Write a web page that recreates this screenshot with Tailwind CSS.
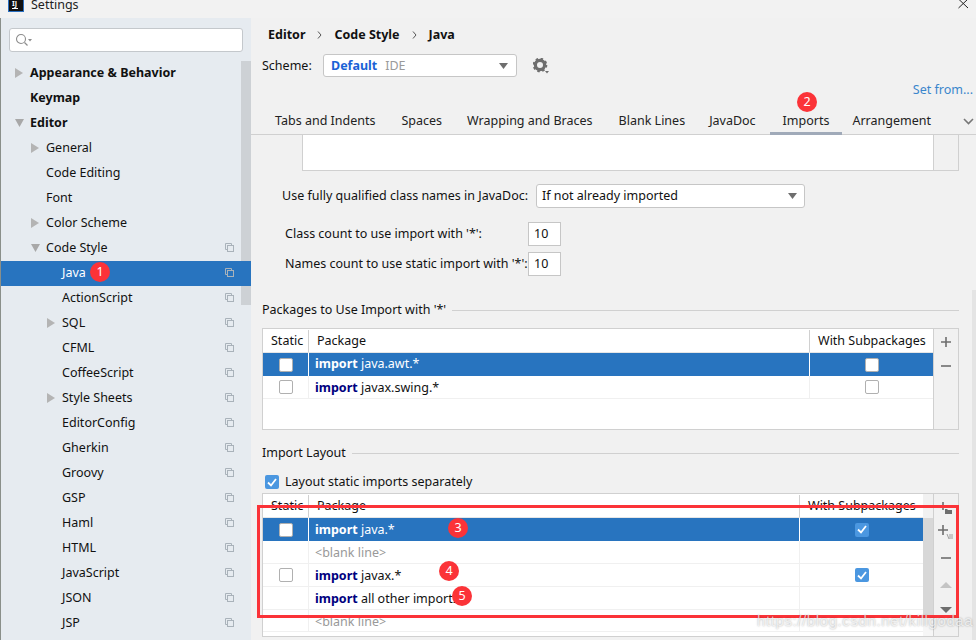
<!DOCTYPE html>
<html><head><meta charset="utf-8">
<script src="https://cdn.jsdelivr.net/npm/@tailwindcss/browser@4"></script>
<title>Settings</title></head>
<body class="m-0">
<div class="relative w-[976px] h-[640px] overflow-hidden bg-[#f1f1f1] text-[12.5px] text-[#111] font-['Noto_Sans','Open_Sans',sans-serif] leading-[18px] flex flex-col">
  <!-- title bar -->
  <div class="h-[18px] shrink-0 flex items-start bg-[#f2f2f2] pl-[8px]">
    <div class="w-[16px] h-[12px] bg-[#111] border-x border-b border-[#2a6fc0] relative overflow-hidden"><div class="absolute left-[3px] bottom-[2px] w-[6px] h-[1px] bg-white"></div><div class="absolute left-[3px] top-0 text-[7px] leading-[7px] text-white font-bold">IJ</div></div>
    <span class="ml-[7px] -mt-[4px] text-[#222]">Settings</span>
    <svg class="ml-auto mr-[7px] -mt-[1px]" width="11" height="10" viewBox="0 0 11 10"><path d="M0.5 0 L10 9 M10 0 L0.5 9" stroke="#222" stroke-width="1" fill="none"/></svg>
  </div>
  <div class="flex flex-1 min-h-0">
    <!-- sidebar -->
    <aside class="relative w-[251px] shrink-0 bg-[#e6ebf0] border-l border-[#8a8f8a] flex flex-col overflow-hidden">
      <div class="mt-[10px] ml-[8px] w-[234px] h-[24px] shrink-0 bg-white border border-[#c4c8cc] rounded-[3px] flex items-center pl-[5px]">
        <svg width="18" height="14" viewBox="0 0 18 14"><circle cx="6" cy="6" r="4.5" fill="none" stroke="#8d8d8d" stroke-width="1.1"/><path d="M9.5 9.5 L12.5 12.5" stroke="#8d8d8d" stroke-width="1.2"/><path d="M13 6 L17 6 L15 8.5 Z" fill="#8d8d8d"/></svg>
      </div>
      <div class="absolute left-[240px] top-[43px] w-[10px] h-[244px] bg-[#cdd1d5]"></div>
      <ul class="mt-[9px] flex flex-col relative">
        <li class="h-[25px] pb-[2px] flex items-center pl-[14px] font-bold"><svg class="w-[9px] h-[10px] mr-[6px]" viewBox="0 0 9 10"><path d="M0 0 L8 5 L0 10 Z" fill="#b4b4b4"/></svg>Appearance &amp; Behavior</li>
        <li class="h-[25px] pb-[2px] flex items-center pl-[29px] font-bold">Keymap</li>
        <li class="h-[25px] pb-[2px] flex items-center pl-[14px] font-bold"><svg class="w-[9px] h-[10px] mr-[6px]" viewBox="0 0 9 10"><path d="M0 1 L9 1 L4.5 9 Z" fill="#a8a8a8"/></svg>Editor</li>
        <li class="h-[25px] pb-[2px] flex items-center pl-[30px]"><svg class="w-[9px] h-[10px] mr-[6px]" viewBox="0 0 9 10"><path d="M0 0 L8 5 L0 10 Z" fill="#b4b4b4"/></svg>General</li>
        <li class="h-[25px] pb-[2px] flex items-center pl-[45px]">Code Editing</li>
        <li class="h-[25px] pb-[2px] flex items-center pl-[45px]">Font</li>
        <li class="h-[25px] pb-[2px] flex items-center pl-[30px]"><svg class="w-[9px] h-[10px] mr-[6px]" viewBox="0 0 9 10"><path d="M0 0 L8 5 L0 10 Z" fill="#b4b4b4"/></svg>Color Scheme</li>
        <li class="h-[25px] pb-[2px] flex items-center pl-[30px]"><svg class="w-[9px] h-[10px] mr-[6px]" viewBox="0 0 9 10"><path d="M0 1 L9 1 L4.5 9 Z" fill="#a8a8a8"/></svg>Code Style<svg class="ml-auto mr-[17px]" width="9" height="9" viewBox="0 0 9 9"><use href="#cp"/></svg></li>
        <li class="h-[25px] pb-[2px] flex items-center pl-[61px] bg-[#2874bf] text-white">Java<svg class="ml-auto mr-[17px]" width="9" height="9" viewBox="0 0 9 9"><use href="#cp"/></svg></li>
        <li class="h-[25px] pb-[2px] flex items-center pl-[61px]">ActionScript<svg class="ml-auto mr-[17px]" width="9" height="9" viewBox="0 0 9 9"><use href="#cp"/></svg></li>
        <li class="h-[25px] pb-[2px] flex items-center pl-[46px]"><svg class="w-[9px] h-[10px] mr-[6px]" viewBox="0 0 9 10"><path d="M0 0 L8 5 L0 10 Z" fill="#b4b4b4"/></svg>SQL<svg class="ml-auto mr-[17px]" width="9" height="9" viewBox="0 0 9 9"><use href="#cp"/></svg></li>
        <li class="h-[25px] pb-[2px] flex items-center pl-[61px]">CFML<svg class="ml-auto mr-[17px]" width="9" height="9" viewBox="0 0 9 9"><use href="#cp"/></svg></li>
        <li class="h-[25px] pb-[2px] flex items-center pl-[61px]">CoffeeScript<svg class="ml-auto mr-[17px]" width="9" height="9" viewBox="0 0 9 9"><use href="#cp"/></svg></li>
        <li class="h-[25px] pb-[2px] flex items-center pl-[46px]"><svg class="w-[9px] h-[10px] mr-[6px]" viewBox="0 0 9 10"><path d="M0 0 L8 5 L0 10 Z" fill="#b4b4b4"/></svg>Style Sheets<svg class="ml-auto mr-[17px]" width="9" height="9" viewBox="0 0 9 9"><use href="#cp"/></svg></li>
        <li class="h-[25px] pb-[2px] flex items-center pl-[61px]">EditorConfig<svg class="ml-auto mr-[17px]" width="9" height="9" viewBox="0 0 9 9"><use href="#cp"/></svg></li>
        <li class="h-[25px] pb-[2px] flex items-center pl-[61px]">Gherkin<svg class="ml-auto mr-[17px]" width="9" height="9" viewBox="0 0 9 9"><use href="#cp"/></svg></li>
        <li class="h-[25px] pb-[2px] flex items-center pl-[61px]">Groovy<svg class="ml-auto mr-[17px]" width="9" height="9" viewBox="0 0 9 9"><use href="#cp"/></svg></li>
        <li class="h-[25px] pb-[2px] flex items-center pl-[61px]">GSP<svg class="ml-auto mr-[17px]" width="9" height="9" viewBox="0 0 9 9"><use href="#cp"/></svg></li>
        <li class="h-[25px] pb-[2px] flex items-center pl-[61px]">Haml<svg class="ml-auto mr-[17px]" width="9" height="9" viewBox="0 0 9 9"><use href="#cp"/></svg></li>
        <li class="h-[25px] pb-[2px] flex items-center pl-[61px]">HTML<svg class="ml-auto mr-[17px]" width="9" height="9" viewBox="0 0 9 9"><use href="#cp"/></svg></li>
        <li class="h-[25px] pb-[2px] flex items-center pl-[61px]">JavaScript<svg class="ml-auto mr-[17px]" width="9" height="9" viewBox="0 0 9 9"><use href="#cp"/></svg></li>
        <li class="h-[25px] pb-[2px] flex items-center pl-[61px]">JSON<svg class="ml-auto mr-[17px]" width="9" height="9" viewBox="0 0 9 9"><use href="#cp"/></svg></li>
        <li class="h-[25px] pb-[2px] flex items-center pl-[61px]">JSP<svg class="ml-auto mr-[17px]" width="9" height="9" viewBox="0 0 9 9"><use href="#cp"/></svg></li>
      </ul>
      <div class="absolute left-[240px] top-[243px] w-[10px] h-[25px] bg-[#2874bf]/80"></div>
      <svg class="hidden"><defs><g id="cp"><path d="M0.5 0.5 H6.5 V2 M0.5 0.5 V6.5 H2" fill="none" stroke="#a9b2ba"/><rect x="2.5" y="2.5" width="6" height="6" fill="none" stroke="#a9b2ba"/></g></defs></svg>
    </aside>
    <!-- main -->
    <main class="relative flex-1 min-w-0 flex flex-col">
      <div class="h-[93px] shrink-0 relative">
        <div class="pt-[4px] pl-[17px] flex items-center font-bold h-[25px] box-content">
          <span>Editor</span><svg class="mx-[12px]" width="5" height="8" viewBox="0 0 5 8"><path d="M1 0.5 L4 4 L1 7.5" fill="none" stroke="#555"/></svg><span>Code Style</span><svg class="mx-[12px]" width="5" height="8" viewBox="0 0 5 8"><path d="M1 0.5 L4 4 L1 7.5" fill="none" stroke="#555"/></svg><span>Java</span>
        </div>
        <div class="flex items-center pl-[11px] mt-[7px]">
          <span class="w-[61px]">Scheme:</span>
          <div class="w-[194px] h-[23px] bg-white border border-[#c6c6c6] rounded-[3px] flex items-center pl-[7px] pr-[8px]">
            <span class="font-bold text-[#1a62d6]">Default</span><span class="ml-[8px] text-[#9a9a9a]">IDE</span>
            <svg class="ml-auto" width="9" height="6" viewBox="0 0 9 6"><path d="M0 0 H9 L4.5 6 Z" fill="#6e6e6e"/></svg>
          </div>
          <svg class="ml-[16px]" width="17" height="16" viewBox="0 0 17 16"><circle cx="7" cy="7" r="4.6" fill="none" stroke="#6e6e6e" stroke-width="3.2"/><circle cx="7" cy="7" r="6.4" fill="none" stroke="#6e6e6e" stroke-width="1.8" stroke-dasharray="2.5 2.5"/><path d="M12 13 H16 L14 15.5 Z" fill="#6e6e6e"/></svg>
        </div>
        <a class="absolute right-[3px] top-[63px] text-[#3a86cc]">Set from...</a>
      </div>
      <!-- tabs -->
      <div class="h-[23px] box-content shrink-0 flex items-center pb-[0px] relative text-[#222] border-b border-[#d0d0d0]">
        <span class="ml-[24px] -mt-[3px]">Tabs and Indents</span><span class="ml-[26px] -mt-[3px]">Spaces</span><span class="ml-[25px] -mt-[3px]">Wrapping and Braces</span><span class="ml-[26px] -mt-[3px]">Blank Lines</span><span class="ml-[24px] -mt-[3px]">JavaDoc</span>
        <span class="ml-[14px] px-[13px] h-[23px] pt-[0px] border-b-[3px] border-[#a0aab9] box-border -mb-[1px] leading-[18px]">Imports</span><span class="ml-[10px] -mt-[3px]">Arrangement</span>
        <svg class="ml-auto mr-[2px] -mt-[3px]" width="11" height="7" viewBox="0 0 11 7"><path d="M1 1 L5.5 5.5 L10 1" fill="none" stroke="#777" stroke-width="1.6"/></svg>
      </div>
      <div class="flex-1 relative pl-[11px]">
        <!-- remnant text box -->
        <div class="ml-[40px] w-[657px] h-[36px] flex border-x border-b border-[#d0d0d0] bg-white">
          <div class="flex-1"></div><div class="w-[25px] bg-[#f1f1f1] border-l border-[#d0d0d0]"></div>
        </div>
        <div class="mt-[13px] ml-[20px] flex items-center h-[24px]">
          <span class="w-[254px] whitespace-nowrap">Use fully qualified class names in JavaDoc:</span>
          <div class="w-[269px] h-[24px] bg-white border border-[#c6c6c6] rounded-[3px] flex items-center pl-[5px] pr-[7px]">If not already imported<svg class="ml-auto" width="9" height="6" viewBox="0 0 9 6"><path d="M0 0 H9 L4.5 6 Z" fill="#6e6e6e"/></svg></div>
        </div>
        <div class="mt-[14px] ml-[23px] flex items-center h-[24px]"><span class="w-[243px]">Class count to use import with '*':</span><div class="w-[33px] h-[24px] bg-white border border-[#c6c6c6] pl-[5px] leading-[22px]">10</div></div>
        <div class="mt-[6px] ml-[23px] flex items-center h-[24px]"><span class="w-[243px] whitespace-nowrap">Names count to use static import with '*':</span><div class="w-[33px] h-[24px] bg-white border border-[#c6c6c6] pl-[5px] leading-[22px]">10</div></div>
        <!-- section 1 -->
        <div class="mt-[25px] flex items-center h-[18px] w-[697px]"><span>Packages to Use Import with '*'</span><div class="flex-1 ml-[6px] h-px bg-[#d0d0d0]"></div></div>
        <div class="mt-[9px] w-[697px] h-[102px] border border-[#d0d0d0] flex">
          <div class="flex-1 bg-white flex flex-col">
            <div class="h-[24px] flex items-center shrink-0 border-b border-[#e6e6e6]"><span class="w-[46px] pl-[8px] h-[22px] leading-[22px] border-r border-[#d0d0d0]">Static</span><span class="w-[501px] pl-[8px] h-[22px] leading-[22px] border-r border-[#d0d0d0]">Package</span><span class="pl-[8px] whitespace-nowrap">With Subpackages</span></div>
            <div class="h-[23px] flex items-center bg-[#2874bf] text-white"><span class="w-[46px] h-full flex items-center justify-center border-r border-white"><i class="block w-[14px] h-[14px] bg-white border border-[#b0b0b0] rounded-[2px]"></i></span><span class="w-[501px] pl-[6px] h-full leading-[22px] border-r border-white"><b>import</b> java.awt.*</span><span class="flex-1 flex justify-center"><i class="block w-[14px] h-[14px] bg-white border border-[#b0b0b0] rounded-[2px]"></i></span></div>
            <div class="h-[23px] flex items-center border-b border-[#f0f0f0]"><span class="w-[46px] h-full flex items-center justify-center border-r border-[#f0f0f0]"><i class="block w-[14px] h-[14px] bg-white border border-[#b0b0b0] rounded-[2px]"></i></span><span class="w-[501px] pl-[6px] h-full leading-[23px] border-r border-[#f0f0f0]"><b class="text-[#000080]">import</b> javax.swing.*</span><span class="flex-1 flex justify-center"><i class="block w-[14px] h-[14px] bg-white border border-[#b0b0b0] rounded-[2px]"></i></span></div>
          </div>
          <div class="w-[25px] border-l border-[#d0d0d0] flex flex-col items-center pt-[8px] gap-[18px]">
            <svg width="10" height="10" viewBox="0 0 10 10"><path d="M0 5 H10 M5 0 V10" stroke="#6e6e6e" stroke-width="1.6"/></svg>
            <svg width="10" height="2" viewBox="0 0 10 2"><path d="M0 1 H10" stroke="#6e6e6e" stroke-width="1.6"/></svg>
          </div>
        </div>
        <!-- section 2 -->
        <div class="mt-[14px] flex items-center h-[18px] w-[697px]"><span>Import Layout</span><div class="flex-1 ml-[6px] h-px bg-[#d0d0d0]"></div></div>
        <div class="mt-[11px] flex items-center h-[18px] pl-[3px]">
          <span class="w-[14px] h-[14px] bg-[#4b97e0] rounded-[2px] flex items-center justify-center"><svg width="10" height="9" viewBox="0 0 10 9"><path d="M1 4.5 L4 7.5 L9 1" fill="none" stroke="#fff" stroke-width="1.8"/></svg></span>
          <span class="ml-[6px]">Layout static imports separately</span>
        </div>
        <div class="mt-[2px] w-[697px] h-[144px] border border-[#d0d0d0] flex">
          <div class="w-[660px] bg-white flex flex-col shrink-0">
            <div class="h-[24px] flex items-center shrink-0 border-b border-[#e6e6e6]"><span class="w-[46px] pl-[8px] h-[22px] leading-[22px] border-r border-[#d0d0d0]">Static</span><span class="w-[491px] pl-[8px] h-[22px] leading-[22px] border-r border-[#d0d0d0]">Package</span><span class="pl-[8px] whitespace-nowrap">With Subpackages</span></div>
            <div class="h-[23px] flex items-center bg-[#2874bf] text-white"><span class="w-[46px] h-full flex items-center justify-center border-r border-white"><i class="block w-[14px] h-[14px] bg-white border border-[#b0b0b0] rounded-[2px]"></i></span><span class="w-[491px] pl-[6px] h-full leading-[23px] border-r border-white"><b>import</b> java.*</span><span class="flex-1 flex justify-center"><span class="w-[14px] h-[14px] bg-[#4b97e0] rounded-[2px] flex items-center justify-center"><svg width="10" height="9" viewBox="0 0 10 9"><path d="M1 4.5 L4 7.5 L9 1" fill="none" stroke="#fff" stroke-width="1.8"/></svg></span></span></div>
            <div class="h-[23px] flex items-center border-b border-[#f0f0f0]"><span class="w-[46px] h-full border-r border-[#f0f0f0]"></span><span class="w-[491px] pl-[6px] h-full leading-[24px] border-r border-[#f0f0f0] text-[#999]">&lt;blank line&gt;</span></div>
            <div class="h-[23px] flex items-center border-b border-[#f0f0f0]"><span class="w-[46px] h-full flex items-center justify-center border-r border-[#f0f0f0]"><i class="block w-[14px] h-[14px] bg-white border border-[#b0b0b0] rounded-[2px]"></i></span><span class="w-[491px] pl-[6px] h-full leading-[24px] border-r border-[#f0f0f0]"><b class="text-[#000080]">import</b> javax.*</span><span class="flex-1 flex justify-center"><span class="w-[14px] h-[14px] bg-[#4b97e0] rounded-[2px] flex items-center justify-center"><svg width="10" height="9" viewBox="0 0 10 9"><path d="M1 4.5 L4 7.5 L9 1" fill="none" stroke="#fff" stroke-width="1.8"/></svg></span></span></div>
            <div class="h-[23px] flex items-center border-b border-[#f0f0f0]"><span class="w-[46px] h-full border-r border-[#f0f0f0]"></span><span class="w-[491px] pl-[6px] h-full leading-[24px] border-r border-[#f0f0f0]"><b class="text-[#000080]">import</b> all other imports</span></div>
            <div class="h-[22px] flex items-center border-b border-[#f0f0f0]"><span class="w-[46px] h-full border-r border-[#f0f0f0]"></span><span class="w-[491px] pl-[6px] h-full leading-[23px] border-r border-[#f0f0f0] text-[#999]">&lt;blank line&gt;</span></div>
          </div>
          <div class="w-[10px] flex flex-col shrink-0 bg-[#f6f6f6]"><div class="h-[24px] bg-[#f1f1f1]"></div><div class="h-[100px] bg-[#d8d8d8]"></div></div>
          <div class="w-[25px] border-l border-[#d0d0d0] flex flex-col items-center">
            <svg class="mt-[7px]" width="14" height="14" viewBox="0 0 14 14"><path d="M0 5 H8 M4 1 V9" stroke="#6e6e6e" stroke-width="1.6"/><path d="M6 8 H8 L9 9 H13 V13 H6 Z" fill="#6e6e6e"/></svg>
            <svg class="mt-[10px]" width="16" height="15" viewBox="0 0 16 15"><path d="M0 5 H10 M5 0 V10" stroke="#6e6e6e" stroke-width="1.6"/><path d="M9 9 L11 14 M12 9 V14 M14 9 V14" stroke="#8a8a8a" stroke-width="0.8" fill="none"/></svg>
            <svg class="mt-[17px]" width="10" height="2" viewBox="0 0 10 2"><path d="M0 1 H10" stroke="#6e6e6e" stroke-width="1.6"/></svg>
            <svg class="mt-[23px]" width="12" height="6" viewBox="0 0 12 6"><path d="M0 6 H12 L6 0 Z" fill="#c4c4c4"/></svg>
            <svg class="mt-[19px]" width="12" height="6" viewBox="0 0 12 6"><path d="M0 0 H12 L6 6 Z" fill="#6e6e6e"/></svg>
          </div>
        </div>
      </div>
      <div class="absolute right-0 top-[272px] w-[4px] h-[350px] bg-[#e4e4e4]"></div>
    </main>
  </div>
  <!-- annotations -->
  <div class="absolute left-[257px] top-[505px] w-[702px] h-[113px] border-[3px] border-[#fb3338]"></div>
  <span class="absolute left-[90px] top-[262px] w-[20px] h-[20px] rounded-full bg-[#fb3338] text-white text-center leading-[20px]">1</span>
  <span class="absolute left-[797px] top-[92px] w-[20px] h-[20px] rounded-full bg-[#fb3338] text-white text-center leading-[20px]">2</span>
  <span class="absolute left-[448px] top-[518px] w-[20px] h-[20px] rounded-full bg-[#fb3338] text-white text-center leading-[20px]">3</span>
  <span class="absolute left-[439px] top-[561px] w-[20px] h-[20px] rounded-full bg-[#fb3338] text-white text-center leading-[20px]">4</span>
  <span class="absolute left-[452px] top-[586px] w-[20px] h-[20px] rounded-full bg-[#fb3338] text-white text-center leading-[20px]">5</span>
  <span class="absolute left-[757px] top-[611px] text-[15px] leading-[20px] text-white/70 [text-shadow:0_0_2px_rgba(0,0,0,0.35)] font-['Liberation_Sans',sans-serif] tracking-[0.6px]">https://blog.csdn.net/killgodaa</span>
</div>
</body></html>
